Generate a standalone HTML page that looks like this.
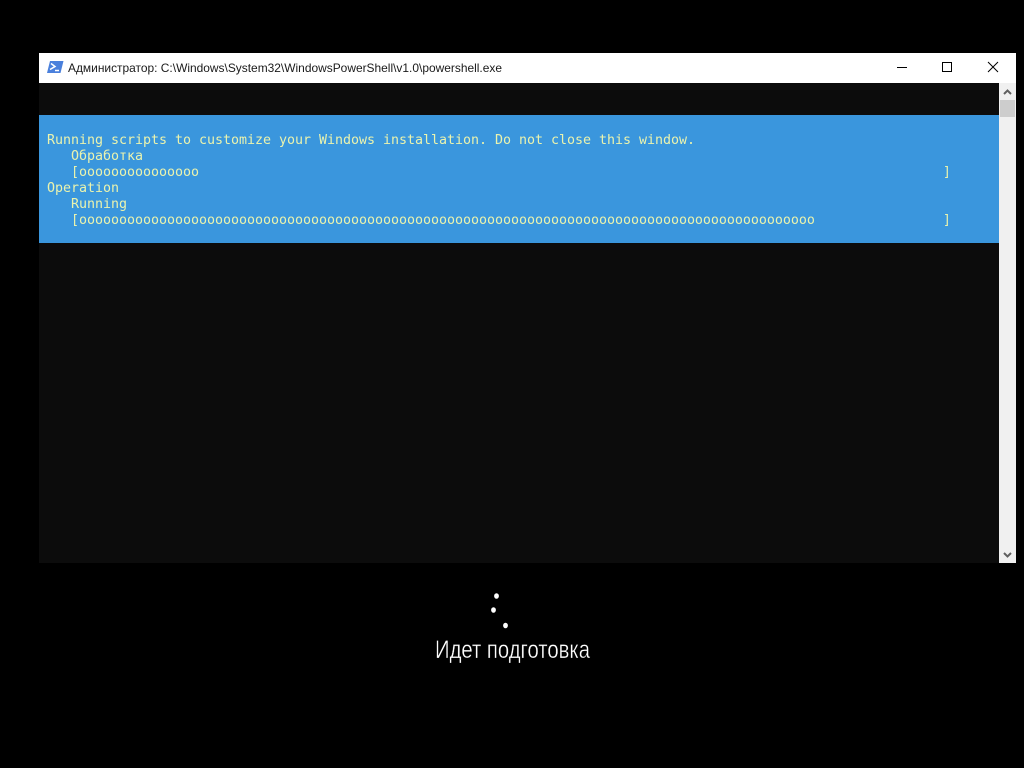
<!DOCTYPE html>
<html lang="ru">
<head>
<meta charset="utf-8">
<title>PowerShell</title>
<style>
html,body{margin:0;padding:0;background:#000;width:1024px;height:768px;overflow:hidden}
div,svg,pre{position:absolute;margin:0}
#title{left:39px;top:53px;width:977px;height:30px;background:#fff}
#console{left:39px;top:83px;width:960px;height:480px;background:#0c0c0c}
#blue{left:39px;top:115px;width:960px;height:128px;background:#3a96dd}
#sb{left:999px;top:83px;width:17px;height:480px;background:#f0f0f0}
#thumb{left:1000px;top:100px;width:15px;height:17px;background:#cdcdcd}
pre{left:47px;top:133px;font:13.33px/16px "DejaVu Sans Mono","Liberation Mono",monospace;letter-spacing:-.025px;color:#eaf3ae;white-space:pre}
</style>
</head>
<body>
<div id="title"></div>
<div id="console"></div>
<div id="blue"></div>
<div id="sb"></div>
<div id="thumb"></div>
<pre>Running scripts to customize your Windows installation. Do not close this window.
   Обработка
   [ooooooooooooooo                                                                                             ]
Operation
   Running
   [oooooooooooooooooooooooooooooooooooooooooooooooooooooooooooooooooooooooooooooooooooooooooooo                ]</pre>
<svg width="1024" height="768" viewBox="0 0 1024 768" style="left:0;top:0">
  <path d="M50 61H63.5L60.5 73H47Z" fill="#4a80dc"/>
  <path d="M51 63.5L55 66.5L50 69.5" fill="none" stroke="#fff" stroke-width="1.5"/>
  <path d="M55 70.5H59" stroke="#fff" stroke-width="1.5"/>
  <text x="68" y="72" font-family="'Liberation Sans',sans-serif" font-size="12" fill="#1a1a1a" textLength="434" lengthAdjust="spacingAndGlyphs">Администратор: C:\Windows\System32\WindowsPowerShell\v1.0\powershell.exe</text>
  <path d="M897 67.5H907" stroke="#000" stroke-width="1"/>
  <rect x="942.5" y="62.5" width="9" height="9" fill="none" stroke="#000" stroke-width="1"/>
  <path d="M988 62L998 72M998 62L988 72" stroke="#000" stroke-width="1"/>
  <path d="M1004 94L1007.5 90.5L1011 94" fill="none" stroke="#606060" stroke-width="2"/>
  <path d="M1004 553L1007.5 556.5L1011 553" fill="none" stroke="#606060" stroke-width="2"/>
  <ellipse cx="496.5" cy="596" rx="2.4" ry="2.8" fill="#fff"/>
  <ellipse cx="493.5" cy="610" rx="2.4" ry="2.8" fill="#fff"/>
  <ellipse cx="505.5" cy="625.5" rx="2.4" ry="2.8" fill="#fff"/>
  <text x="435" y="658" font-family="'Liberation Sans',sans-serif" font-size="25" fill="#fff" stroke="#000" stroke-width=".35" paint-order="normal" textLength="155" lengthAdjust="spacingAndGlyphs">Идет подготовка</text>
</svg>
</body>
</html>
